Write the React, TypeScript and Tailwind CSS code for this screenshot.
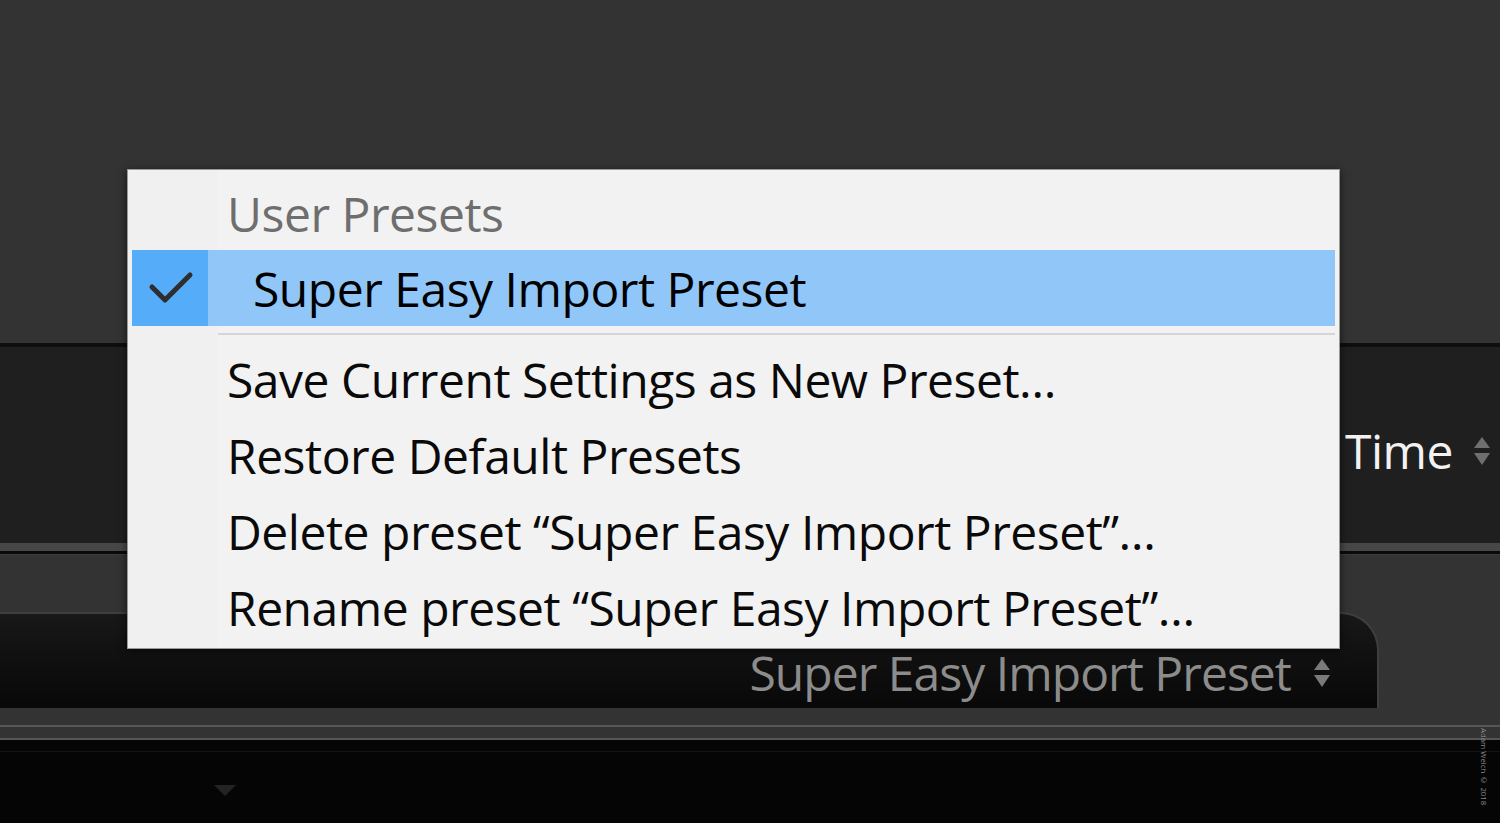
import React from "react";

const font = { fontFamily: '"Open Sans", "Noto Sans", sans-serif' };

function SortArrows({ className }: { className: string }) {
  return (
    <svg width="18" height="30" viewBox="0 0 18 30" className={className}>
      <path d="M9 1 L17 12 L1 12 Z" fill="currentColor" />
      <path d="M1 17 L17 17 L9 29 Z" fill="currentColor" />
    </svg>
  );
}

function PresetMenu() {
  const items = [
    "Save Current Settings as New Preset…",
    "Restore Default Presets",
    "Delete preset “Super Easy Import Preset”…",
    "Rename preset “Super Easy Import Preset”…",
  ];
  return (
    <div
      className="absolute left-[127px] top-[169px] w-[1213px] h-[480px] bg-[#f2f2f2] border border-[#9a9a9a] shadow-[0_2px_8px_rgba(0,0,0,0.6)] flex"
      style={font}
    >
      <div className="w-[90px] shrink-0 bg-[#f0f0f0]" />
      <div className="flex-1" />
      <div className="absolute inset-0 flex flex-col">
        <div className="h-[80px] flex items-center pl-[99px] text-[48px] text-[#6e6e6e] tracking-[-0.01em] leading-none pt-[8px]">
          User Presets
        </div>
        <div className="h-[76px] mx-[4px] flex bg-[#90c7f8]">
          <div className="w-[76px] h-full bg-[#55acf8] flex items-center justify-center">
            <svg width="76" height="76" viewBox="0 0 76 76">
              <path
                d="M20 37 L33 50 L58 25"
                fill="none"
                stroke="#2e2e2e"
                strokeWidth="5"
                strokeLinecap="round"
                strokeLinejoin="round"
              />
            </svg>
          </div>
          <div className="flex items-center pl-[45px] text-[48px] text-black tracking-[-0.01em] leading-none pt-[2px]">
            Super Easy Import Preset
          </div>
        </div>
        <div className="h-[16px] flex items-center pl-[90px] pr-[4px]">
          <div className="h-[2px] w-full bg-[#d6d6d6]" />
        </div>
        {items.map((t) => (
          <div
            key={t}
            className="h-[76px] flex items-center pl-[99px] text-[48px] text-[#0a0a0a] tracking-[-0.01em] leading-none"
          >
            {t}
          </div>
        ))}
      </div>
    </div>
  );
}

export default function App() {
  return (
    <div className="relative w-[1500px] h-[823px] overflow-hidden bg-[#050505]" style={font}>
      <div className="h-[343px] bg-[#333333]" />
      <div className="h-[4px] bg-[#0e0e0e]" />
      <div className="h-[196px] bg-[#1f1f1f] flex items-center justify-end pr-[9px] gap-[20px]">
        <span className="text-[48px] text-[#f2f2f2] tracking-[-0.01em] leading-none mt-[12px]">Time</span>
        <SortArrows className="text-[#6f6f6f] mt-[12px]" />
      </div>
      <div className="h-[8px] bg-[#474747]" />
      <div className="h-[3px] bg-[#0a0a0a]" />
      <div className="h-[58px] bg-[#333333] border-t border-[#3d3d3d]" />
      <div className="h-[96px] flex bg-[#333333]">
        <div className="w-[1379px] h-full rounded-tr-[38px] border-t-2 border-r-2 border-[#3f3f3f] bg-gradient-to-b from-[#181818] to-[#080808] flex items-center justify-end pr-[46px] gap-[22px]">
          <span className="text-[48px] text-[#8c8c8c] tracking-[-0.02em] leading-none mt-[24px]">
            Super Easy Import Preset
          </span>
          <SortArrows className="text-[#7a7a7a] mt-[24px]" />
        </div>
      </div>
      <div className="h-[17px] bg-[#333333]" />
      <div className="h-[2px] bg-[#565656]" />
      <div className="h-[11px] bg-[#333333]" />
      <div className="h-[2px] bg-[#565656]" />
      <div className="h-[12px] bg-[#050505] border-b border-[#141414]" />
      <div className="pl-[214px] pt-[33px]">
        <svg width="22" height="12" viewBox="0 0 22 12">
          <path d="M0 0 L22 0 L11 11 Z" fill="#232323" />
        </svg>
      </div>
      <div className="absolute left-[1479px] top-[728px] [writing-mode:vertical-rl] whitespace-nowrap text-[7.8px] leading-none text-[#8a8a8a]">
        Adam Welch © 2018
      </div>
      <PresetMenu />
    </div>
  );
}
